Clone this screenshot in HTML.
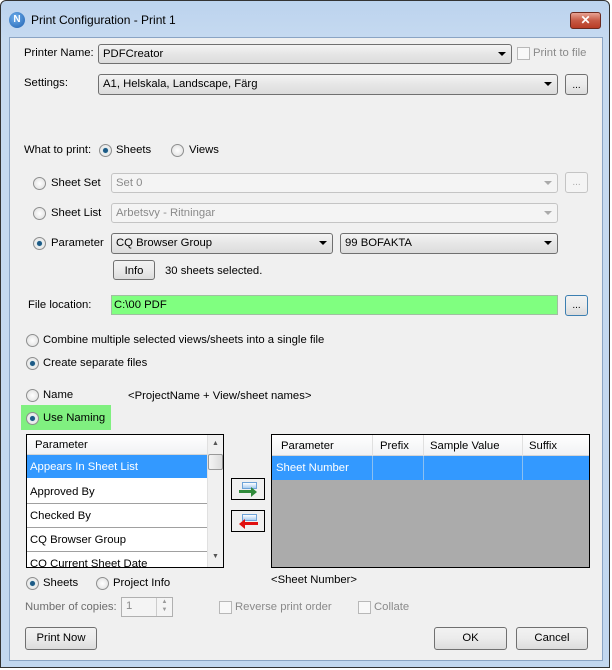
<!DOCTYPE html><html><head><meta charset="utf-8"><style>
*{box-sizing:border-box;margin:0;padding:0}
body{width:612px;height:670px;background:#fff;position:relative;overflow:hidden;font-family:"Liberation Sans",sans-serif;font-size:11.3px;color:#000}
.a{position:absolute;white-space:nowrap}
.frame{left:0;top:0;width:610px;height:668px;border:1px solid #333;border-radius:6px 6px 0 0;background:linear-gradient(#bcd3ee,#c6daf0 40px,#c2d7ef)}
.panel{left:9px;top:37px;width:594px;height:624px;background:#f0f0f0;border:1px solid #8aa4c4}
.cb{background:linear-gradient(#f4f4f4,#e6e6e6 50%,#dcdcdc);border:1px solid #707070;border-radius:3px;padding:3px 4px;line-height:13px}
.cb.dis{background:#f4f4f4;border-color:#c4c4c4;color:#8a8a8a}
.arr{position:absolute;right:5px;top:7px;width:0;height:0;border-left:4px solid transparent;border-right:4px solid transparent;border-top:4px solid #000}
.dis .arr{border-top-color:#aaa}
.btn{background:linear-gradient(#f2f2f2,#ebebeb 50%,#dcdcdc);border:1px solid #707070;border-radius:3px;text-align:center;line-height:20px}
.rd{width:13px;height:13px;border-radius:50%;border:1px solid #8e8f8f;background:radial-gradient(#fff,#dcdcdc)}
.rd.on::after{content:"";position:absolute;left:3px;top:3px;width:5px;height:5px;border-radius:50%;background:#1d5a86;box-shadow:0 0 1px #5ab}
.chk{width:13px;height:13px;border:1px solid #b8b8b8;background:#f8f8f8}
.g{color:#8a8a8a}
.row{position:absolute;left:0;width:180px;height:24px;border-bottom:1px solid #a0a0a0;padding-left:3px;line-height:24px}
</style></head><body>
<div class="a frame"></div>
<div class="a" style="left:9px;top:12px;width:16px;height:16px;border-radius:50%;background:radial-gradient(circle at 40% 35%,#6fb0ee,#1e5fae);color:#fff;font-weight:bold;font-size:10px;text-align:center;line-height:16px">N</div>
<div class="a" style="left:31px;top:13px;font-size:12px;color:#000">Print Configuration - Print 1</div>
<div class="a" style="left:570px;top:12px;width:31px;height:17px;border:1px solid #6b2a20;border-radius:3px;background:linear-gradient(#e8a393,#c75a45 50%,#b83c26);color:#fff;font-weight:bold;text-align:center;line-height:15px;font-size:12px">✕</div>
<div class="a panel"></div>

<div class="a" style="left:24px;top:47px">Printer Name:</div>
<div class="a cb" style="left:98px;top:44px;width:414px;height:20px">PDFCreator<span class="arr"></span></div>
<div class="a chk" style="left:517px;top:47px"></div>
<div class="a g" style="left:533px;top:47px">Print to file</div>

<div class="a" style="left:24px;top:77px">Settings:</div>
<div class="a cb" style="left:98px;top:74px;width:460px;height:21px">A1, Helskala, Landscape, Färg<span class="arr"></span></div>
<div class="a btn" style="left:565px;top:74px;width:23px;height:21px;line-height:22px;font-size:10px">...</div>

<div class="a" style="left:24px;top:144px">What to print:</div>
<div class="a rd on" style="left:99px;top:144px"></div><div class="a" style="left:116px;top:144px">Sheets</div>
<div class="a rd" style="left:171px;top:144px"></div><div class="a" style="left:189px;top:144px">Views</div>

<div class="a rd" style="left:33px;top:177px"></div><div class="a" style="left:51px;top:177px">Sheet Set</div>
<div class="a cb dis" style="left:111px;top:173px;width:447px;height:20px">Set 0<span class="arr"></span></div>
<div class="a btn" style="left:565px;top:172px;width:23px;height:21px;border-color:#c4c4c4;background:#f4f4f4;color:#aaa;font-size:10px">...</div>

<div class="a rd" style="left:33px;top:207px"></div><div class="a" style="left:51px;top:207px">Sheet List</div>
<div class="a cb dis" style="left:111px;top:203px;width:447px;height:20px">Arbetsvy - Ritningar<span class="arr"></span></div>

<div class="a rd on" style="left:33px;top:237px"></div><div class="a" style="left:51px;top:237px">Parameter</div>
<div class="a cb" style="left:111px;top:233px;width:222px;height:21px">CQ Browser Group<span class="arr"></span></div>
<div class="a cb" style="left:340px;top:233px;width:218px;height:21px">99 BOFAKTA<span class="arr"></span></div>

<div class="a btn" style="left:113px;top:260px;width:42px;height:20px">Info</div>
<div class="a" style="left:165px;top:265px">30 sheets selected.</div>

<div class="a" style="left:28px;top:299px">File location:</div>
<div class="a" style="left:111px;top:295px;width:447px;height:20px;background:#80ff80;border:1px solid #a0c0a0;padding:3px 2px;line-height:13px">C:\00 PDF</div>
<div class="a btn" style="left:565px;top:295px;width:23px;height:21px;border-color:#3c7fb1;font-size:10px">...</div>

<div class="a rd" style="left:26px;top:334px"></div><div class="a" style="left:43px;top:334px">Combine multiple selected views/sheets into a single file</div>
<div class="a rd on" style="left:26px;top:357px"></div><div class="a" style="left:43px;top:357px">Create separate files</div>
<div class="a rd" style="left:26px;top:389px"></div><div class="a" style="left:43px;top:389px">Name</div>
<div class="a" style="left:128px;top:390px">&lt;ProjectName + View/sheet names&gt;</div>
<div class="a" style="left:21px;top:405px;width:90px;height:25px;background:#80f080"></div>
<div class="a rd on" style="left:26px;top:412px"></div><div class="a" style="left:43px;top:412px">Use Naming</div>

<div class="a" style="left:26px;top:434px;width:198px;height:134px;border:1px solid #000;background:#fff;overflow:hidden">
 <div class="a" style="left:0;top:0;width:180px;height:20px;background:linear-gradient(#fff,#f1f2f4);border-bottom:1px solid #d5d5d5;padding-left:8px;line-height:20px">Parameter</div>
 <div class="row" style="top:20px;background:#3399ff;color:#fff;border-color:#fff">Appears In Sheet List</div>
 <div class="row" style="top:45px;border-bottom-color:#a0a0a0">Approved By</div>
 <div class="row" style="top:69px">Checked By</div>
 <div class="row" style="top:93px">CQ Browser Group</div>
 <div class="row" style="top:117px">CQ Current Sheet Date</div>
 <div class="a" style="left:180px;top:0;width:17px;height:132px;background:#f0f0f0;border-left:1px solid #e0e0e0"></div>
 <div class="a" style="left:185px;top:5px;font-size:7px;color:#555">▲</div>
 <div class="a" style="left:181px;top:19px;width:15px;height:16px;border:1px solid #999;border-radius:2px;background:linear-gradient(90deg,#f4f4f4,#dcdcdc)"></div>
 <div class="a" style="left:185px;top:118px;font-size:7px;color:#555">▼</div>
</div>

<div class="a" style="left:231px;top:478px;width:34px;height:22px;border:1px solid #000;background:#f0f0f0">
 <div class="a" style="left:10px;top:3px;width:15px;height:7px;border:1px solid #6ea3d8;background:linear-gradient(#fff,#a9cdf0)"></div>
 <div class="a" style="left:7px;top:11px;width:14px;height:3px;background:#2f8a3a"></div>
 <div class="a" style="left:19px;top:8px;border-left:6px solid #2f8a3a;border-top:5px solid transparent;border-bottom:5px solid transparent"></div>
</div>
<div class="a" style="left:231px;top:510px;width:34px;height:22px;border:1px solid #000;background:#f0f0f0">
 <div class="a" style="left:10px;top:3px;width:15px;height:7px;border:1px solid #6ea3d8;background:linear-gradient(#fff,#a9cdf0)"></div>
 <div class="a" style="left:12px;top:11px;width:14px;height:3px;background:#e01010"></div>
 <div class="a" style="left:7px;top:8px;border-right:6px solid #e01010;border-top:5px solid transparent;border-bottom:5px solid transparent"></div>
</div>

<div class="a" style="left:271px;top:434px;width:319px;height:134px;border:1px solid #000;background:#ababab;overflow:hidden">
 <div class="a" style="left:0;top:0;width:318px;height:21px;background:linear-gradient(#fff,#f1f2f4);border-bottom:1px solid #d5d5d5"></div>
 <div class="a" style="left:9px;top:5px">Parameter</div>
 <div class="a" style="left:100px;top:0;height:21px;border-left:1px solid #e0e0e0"></div>
 <div class="a" style="left:108px;top:5px">Prefix</div>
 <div class="a" style="left:151px;top:0;height:21px;border-left:1px solid #e0e0e0"></div>
 <div class="a" style="left:158px;top:5px">Sample Value</div>
 <div class="a" style="left:250px;top:0;height:21px;border-left:1px solid #e0e0e0"></div>
 <div class="a" style="left:257px;top:5px">Suffix</div>
 <div class="a" style="left:0;top:21px;width:318px;height:24px;background:#3399ff"></div>
 <div class="a" style="left:100px;top:21px;height:24px;border-left:1px solid #8cc0f0"></div>
 <div class="a" style="left:151px;top:21px;height:24px;border-left:1px solid #8cc0f0"></div>
 <div class="a" style="left:250px;top:21px;height:24px;border-left:1px solid #8cc0f0"></div>
 <div class="a" style="left:4px;top:27px;color:#fff">Sheet Number</div>
</div>
<div class="a" style="left:271px;top:574px">&lt;Sheet Number&gt;</div>

<div class="a rd on" style="left:26px;top:577px"></div><div class="a" style="left:43px;top:577px">Sheets</div>
<div class="a rd" style="left:96px;top:577px"></div><div class="a" style="left:113px;top:577px">Project Info</div>

<div class="a g" style="left:25px;top:601px;color:#6d6d6d">Number of copies:</div>
<div class="a" style="left:121px;top:597px;width:52px;height:20px;border:1px solid #b0b0b0;background:#f4f4f4;color:#8a8a8a;padding:2px 4px">1</div>
<div class="a" style="left:156px;top:598px;width:16px;height:18px;border-left:1px solid #ccc;font-size:6px;color:#999;text-align:center;line-height:8px">▲<br>▼</div>
<div class="a chk" style="left:219px;top:601px"></div><div class="a g" style="left:235px;top:601px">Reverse print order</div>
<div class="a chk" style="left:358px;top:601px"></div><div class="a g" style="left:374px;top:601px">Collate</div>

<div class="a btn" style="left:25px;top:627px;width:72px;height:23px">Print Now</div>
<div class="a btn" style="left:434px;top:627px;width:73px;height:23px">OK</div>
<div class="a btn" style="left:516px;top:627px;width:72px;height:23px">Cancel</div>
</body></html>
